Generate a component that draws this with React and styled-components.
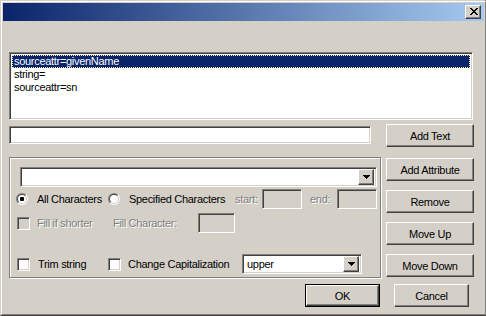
import React from "react";
import styled, { createGlobalStyle, css } from "styled-components";

const face = "#d4d0c8";

const GlobalStyle = createGlobalStyle`
  body {
    margin: 0;
    background: ${face};
    font-family: "Liberation Sans", Arial, sans-serif;
    font-size: 11px;
    letter-spacing: -0.3px;
    color: #000;
  }
`;

const raised = css`
  border: 1px solid;
  border-color: #fff #404040 #404040 #fff;
  box-shadow: inset -1px -1px #808080, inset 1px 1px ${face};
  background: ${face};
`;

const sunken = css`
  border: 1px solid;
  border-color: #808080 #fff #fff #808080;
  box-shadow: inset 1px 1px #404040, inset -1px -1px ${face};
`;

const Window = styled.div`
  width: 486px;
  height: 316px;
  box-sizing: border-box;
  border: 1px solid;
  border-color: ${face} #404040 #404040 ${face};
  display: flex;
`;

const WindowInner = styled.div`
  flex: 1;
  border: 1px solid;
  border-color: #fff #808080 #808080 #fff;
  padding: 1px;
  display: flex;
  flex-direction: column;
  background: ${face};
`;

const TitleBar = styled.div`
  height: 18px;
  flex-shrink: 0;
  background: linear-gradient(to right, #0a246a, #a6caf0);
  display: flex;
  align-items: center;
  justify-content: flex-end;
  padding-right: 3px;
`;

const CloseButton = styled.div`
  ${raised};
  box-sizing: border-box;
  width: 16px;
  height: 14px;
  display: flex;
  align-items: center;
  justify-content: center;
  padding: 0 0 1px 1px;
`;

const Body = styled.div`
  flex: 1;
  padding: 31px 10px 0 6px;
  display: flex;
  flex-direction: column;
`;

const ListBox = styled.div`
  ${sunken};
  box-sizing: border-box;
  width: 464px;
  height: 68px;
  background: #fff;
  padding: 2px;
`;

const ListItem = styled.div`
  height: 13px;
  line-height: 13px;
  padding-left: 2px;
  white-space: nowrap;
  ${(p) =>
    p.$selected &&
    css`
      background: #0a246a;
      color: #fff;
      outline: 1px dotted #f0ecb0;
      outline-offset: -1px;
    `}
`;

const Row = styled.div`
  display: flex;
  align-items: flex-start;
  margin-top: ${(p) => p.$top}px;
`;

const TextField = styled.div`
  ${sunken};
  box-sizing: border-box;
  width: ${(p) => p.$width}px;
  height: ${(p) => p.$height || 20}px;
  margin-top: ${(p) => p.$top || 0}px;
  margin-left: ${(p) => p.$left || 0}px;
  background: ${(p) => (p.$disabled ? face : "#fff")};
  flex-shrink: 0;
`;

const Button = styled.div`
  ${raised};
  box-sizing: border-box;
  width: ${(p) => p.$width || 88}px;
  height: 23px;
  display: flex;
  align-items: center;
  justify-content: center;
  margin-left: ${(p) => p.$left || 0}px;
  flex-shrink: 0;
`;

const DefaultButton = styled.div`
  box-sizing: border-box;
  width: 75px;
  height: 23px;
  border: 1px solid #000;
  display: flex;
  flex-shrink: 0;
`;

const DefaultButtonFace = styled.div`
  flex: 1;
  border: 1px solid;
  border-color: #fff #404040 #404040 #fff;
  box-shadow: inset -1px -1px #808080;
  display: flex;
  align-items: center;
  justify-content: center;
`;

const GroupBox = styled.div`
  box-sizing: border-box;
  width: 372px;
  height: 121px;
  border: 1px solid #808080;
  box-shadow: inset 1px 1px #fff, 1px 1px #fff;
  padding: 9px 0 0 6px;
  display: flex;
  flex-direction: column;
  flex-shrink: 0;
`;

const ButtonColumn = styled.div`
  display: flex;
  flex-direction: column;
  gap: 9px;
  margin: 1px 0 0 5px;
`;

const GroupRow = styled.div`
  display: flex;
  align-items: center;
  height: 20px;
  margin-top: ${(p) => p.$top}px;
  white-space: nowrap;
`;

const Combo = styled.div`
  ${sunken};
  box-sizing: border-box;
  width: ${(p) => p.$width}px;
  height: 20px;
  margin-left: ${(p) => p.$left || 0}px;
  background: #fff;
  padding: 2px;
  display: flex;
  align-items: center;
  flex-shrink: 0;
`;

const ComboText = styled.div`
  flex: 1;
  padding-left: 2px;
`;

const DropButton = styled.div`
  ${raised};
  box-sizing: border-box;
  width: 16px;
  height: 16px;
  display: flex;
  align-items: center;
  justify-content: center;
`;

const Option = styled.div`
  display: flex;
  align-items: center;
  width: ${(p) => p.$width}px;
  margin-left: ${(p) => p.$left || 0}px;
  flex-shrink: 0;
  ${(p) =>
    p.$disabled &&
    css`
      color: #808080;
      text-shadow: 1px 1px #fff;
    `}
`;

const Radio = styled.div`
  position: relative;
  box-sizing: border-box;
  width: 12px;
  height: 12px;
  border-radius: 50%;
  border: 1px solid;
  border-color: #808080 #fff #fff #808080;
  margin-right: 9px;
  flex-shrink: 0;
  &::before {
    content: "";
    position: absolute;
    inset: 0;
    border-radius: 50%;
    border: 1px solid;
    border-color: #404040 ${face} ${face} #404040;
    background: #fff;
  }
  ${(p) =>
    p.$checked &&
    css`
      &::after {
        content: "";
        position: absolute;
        left: 3px;
        top: 3px;
        width: 4px;
        height: 4px;
        border-radius: 1px;
        background: #000;
      }
    `}
`;

const Check = styled.div`
  ${sunken};
  box-sizing: border-box;
  width: 13px;
  height: 13px;
  background: ${(p) => (p.$disabled ? face : "#fff")};
  margin-right: ${(p) => p.$gap || 8}px;
  flex-shrink: 0;
`;

const Label = styled.div`
  width: ${(p) => (p.$width ? `${p.$width}px` : "auto")};
  margin-left: ${(p) => p.$left || 0}px;
  flex-shrink: 0;
  ${(p) =>
    p.$disabled &&
    css`
      color: #808080;
      text-shadow: 1px 1px #fff;
    `}
`;

const FooterRow = styled.div`
  display: flex;
  justify-content: flex-end;
  gap: 14px;
  margin: 6px 5px 0 0;
`;

const CloseGlyph = () => (
  <svg width="8" height="7" viewBox="0 0 8 7" shapeRendering="crispEdges">
    <path
      d="M0 0h2v1h-2zM6 0h2v1h-2zM1 1h2v1h-2zM5 1h2v1h-2zM2 2h4v1h-4zM3 3h2v1h-2zM2 4h4v1h-4zM1 5h2v1h-2zM5 5h2v1h-2zM0 6h2v1h-2zM6 6h2v1h-2z"
      fill="#000"
    />
  </svg>
);

const Arrow = () => (
  <svg width="7" height="4" viewBox="0 0 7 4" shapeRendering="crispEdges">
    <path d="M0 0h7v1h-7zM1 1h5v1h-5zM2 2h3v1h-3zM3 3h1v1h-1z" fill="#000" />
  </svg>
);

const items = ["sourceattr=givenName", "string=", "sourceattr=sn"];

export default function App() {
  return (
    <>
      <GlobalStyle />
      <Window>
        <WindowInner>
          <TitleBar>
            <CloseButton>
              <CloseGlyph />
            </CloseButton>
          </TitleBar>
          <Body>
            <ListBox>
              {items.map((t, i) => (
                <ListItem key={t} $selected={i === 0}>
                  {t}
                </ListItem>
              ))}
            </ListBox>

            <Row $top={4}>
              <TextField $width={362} $height={18} $top={2} />
              <Button $left={15}>Add Text</Button>
            </Row>

            <Row $top={10}>
              <GroupBox>
                <Combo $width={357} $left={4}>
                  <ComboText />
                  <DropButton>
                    <Arrow />
                  </DropButton>
                </Combo>

                <GroupRow $top={2}>
                  <Option $width={92}>
                    <Radio $checked />
                    All Characters
                  </Option>
                  <Option $width={127}>
                    <Radio />
                    Specified Characters
                  </Option>
                  <Label $width={27} $disabled>
                    start:
                  </Label>
                  <TextField $width={40} $disabled />
                  <Label $width={27} $left={8} $disabled>
                    end:
                  </Label>
                  <TextField $width={40} $disabled />
                </GroupRow>

                <GroupRow $top={4}>
                  <Option $width={96} $left={1} $disabled>
                    <Check $disabled $gap={7} />
                    Fill if shorter
                  </Option>
                  <Label $width={85} $disabled>
                    Fill Character:
                  </Label>
                  <TextField $width={37} $disabled />
                </GroupRow>

                <GroupRow $top={21}>
                  <Option $width={91} $left={1}>
                    <Check />
                    Trim string
                  </Option>
                  <Option $width={134}>
                    <Check $gap={7} />
                    Change Capitalization
                  </Option>
                  <Combo $width={120}>
                    <ComboText>upper</ComboText>
                    <DropButton>
                      <Arrow />
                    </DropButton>
                  </Combo>
                </GroupRow>
              </GroupBox>

              <ButtonColumn>
                <Button>Add Attribute</Button>
                <Button>Remove</Button>
                <Button>Move Up</Button>
                <Button>Move Down</Button>
              </ButtonColumn>
            </Row>

            <FooterRow>
              <DefaultButton>
                <DefaultButtonFace>OK</DefaultButtonFace>
              </DefaultButton>
              <Button $width={75}>Cancel</Button>
            </FooterRow>
          </Body>
        </WindowInner>
      </Window>
    </>
  );
}
